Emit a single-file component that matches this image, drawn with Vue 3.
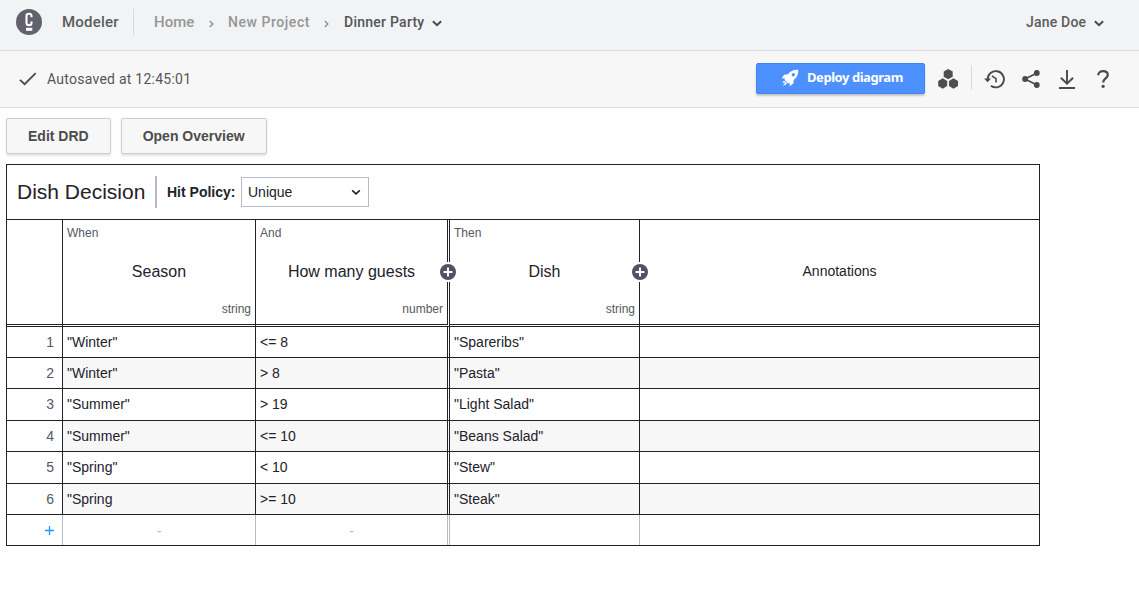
<script setup>
const rules = [
  { season: '"Winter"', guests: '<= 8', dish: '"Spareribs"' },
  { season: '"Winter"', guests: '> 8', dish: '"Pasta"' },
  { season: '"Summer"', guests: '> 19', dish: '"Light Salad"' },
  { season: '"Summer"', guests: '<= 10', dish: '"Beans Salad"' },
  { season: '"Spring"', guests: '< 10', dish: '"Stew"' },
  { season: '"Spring', guests: '>= 10', dish: '"Steak"' },
]
</script>

<template>
  <div class="app">
    <header class="topbar">
      <svg class="logo" width="26" height="26" viewBox="0 0 26 26">
        <circle cx="13" cy="13" r="13" fill="#62626e" />
        <path d="M15.500 8.300V7Q15.500 4.800 13 4.800T10.500 7V14Q10.500 16.200 13 16.200T15.500 14V12.600" fill="none" stroke="#fff" stroke-width="2.100" />
        <rect x="10" y="18.800" width="6.300" height="3" fill="#fff" />
      </svg>
      <span class="product">Modeler</span>
      <span class="divider"></span>
      <nav class="crumbs">
        <a class="home">Home</a>
        <svg class="sep" width="5" height="8" viewBox="0 0 5 8"><path d="M.8 1 3.9 4 .8 7" /></svg>
        <a class="project">New Project</a>
        <svg class="sep" width="5" height="8" viewBox="0 0 5 8"><path d="M.8 1 3.9 4 .8 7" /></svg>
        <a class="current">Dinner Party</a>
        <svg class="chev" width="10" height="7" viewBox="0 0 10 7"><path d="M.9 1.2 5 5.2 9.1 1.2" /></svg>
      </nav>
      <div class="user">
        <span>Jane Doe</span>
        <svg class="chev" width="10" height="7" viewBox="0 0 10 7"><path d="M.9 1.2 5 5.2 9.1 1.2" /></svg>
      </div>
    </header>

    <div class="toolbar">
      <svg class="check" width="18" height="14" viewBox="0 0 18 14"><path d="M1 7.8 5.6 12.2 16.7 1.2" fill="none" stroke="#4a4a4a" stroke-width="1.8" /></svg>
      <span class="saved">Autosaved at 12:45:01</span>
      <button class="deploy">
        <svg width="18" height="18" viewBox="0 0 18 18">
          <path fill="#fff" fill-rule="evenodd" d="M17.2.8C12.5.5 9.4 2.1 7 5.2L3.2 5.8.7 9.2l3.4.2-.7 1.4 3.7 3.7 1.5-.8.2 3.5 3.5-2.6.5-3.8C15.9 8.500 17.400 5.500 17.200.8ZM12.300 4.100a1.700 1.700 0 1 1 0 3.400 1.700 1.700 0 0 1 0-3.400Z" />
          <path fill="#fff" d="M2.800 11.800 1.200 14.200l2.100-.7.500.7-2 2.700 3.600-1.700.5-1.300Z" />
        </svg>
        <span>Deploy diagram</span>
      </button>
      <svg class="hexes" width="20" height="20" viewBox="0 0 20 20" fill="#4f4f4f">
        <path d="M10.200 0l4.500 2.600v5.200l-4.500 2.500-4.500-2.500V2.600Z" />
        <path d="M4.700 9.300l4.500 2.600v5.200l-4.500 2.600-4.500-2.600v-5.200Z" />
        <path d="M15.500 9.300l4.500 2.600v5.200l-4.500 2.600-4.500-2.600v-5.200Z" />
      </svg>
      <span class="split"></span>
      <svg class="history" width="21" height="20" viewBox="0 0 21 20" fill="none" stroke="#4a4a4a" stroke-width="1.900">
        <path d="M3.700 10.500a8.100 8.100 0 1 1 3.200 6.200" />
        <path d="M0 9.500h7L3.600 13.200Z" fill="#4a4a4a" stroke="none" />
        <path d="M7.900 6.800 12 9.700V13.500" stroke-width="1.600" />
      </svg>
      <svg class="share" width="18" height="18" viewBox="0 0 18 18">
        <path d="M15 3 3 9l12 6" fill="none" stroke="#4a4a4a" stroke-width="1.700" />
        <g fill="#4a4a4a"><circle cx="14.800" cy="3" r="2.900" /><circle cx="3.100" cy="9" r="2.900" /><circle cx="14.800" cy="15" r="2.900" /></g>
      </svg>
      <svg class="download" width="16" height="19" viewBox="0 0 16 19" fill="none" stroke="#4a4a4a" stroke-width="1.900">
        <path d="M8 0V13M1.900 7.800 8 13.700 14.100 7.800M0 18H16" />
      </svg>
      <svg class="help" width="12" height="18" viewBox="0 0 12 18">
        <path d="M1.200 5.300C1.200 2.700 3.200 1.200 6 1.200S10.800 2.700 10.800 5C10.800 8 6.200 8.300 6.200 12.600" fill="none" stroke="#4a4a4a" stroke-width="2.200" />
        <circle cx="6.100" cy="16.300" r="1.600" fill="#4a4a4a" />
      </svg>
    </div>

    <main>
      <div class="actions">
        <button>Edit DRD</button>
        <button>Open Overview</button>
      </div>

      <section class="decision">
        <div class="title-row">
          <h1>Dish Decision</h1>
          <div class="policy">
            <label>Hit Policy:</label>
            <div class="select">
              <span>Unique</span>
              <svg width="10" height="7" viewBox="0 0 10 7"><path d="M1.200 1.300 5 4.900 8.800 1.300" fill="none" stroke="#22222a" stroke-width="1.600" /></svg>
            </div>
          </div>
        </div>

        <div class="row head">
          <div class="cell"></div>
          <div class="cell"><small>When</small><b>Season</b><small class="type">string</small></div>
          <div class="cell inputs-end">
            <small>And</small><b>How many guests</b><small class="type">number</small>
            <svg class="add" width="22" height="22" viewBox="0 0 22 22">
              <rect x="5" y="1" width="12" height="20" fill="#fff" /><circle cx="11" cy="11" r="8" fill="#4d5360" /><path d="M6.500 11h9M11 6.500v9" stroke="#fff" stroke-width="2" />
            </svg>
          </div>
          <div class="cell">
            <small>Then</small><b>Dish</b><small class="type">string</small>
            <svg class="add" width="22" height="22" viewBox="0 0 22 22">
              <rect x="5" y="1" width="12" height="20" fill="#fff" /><circle cx="11" cy="11" r="8" fill="#4d5360" /><path d="M6.500 11h9M11 6.500v9" stroke="#fff" stroke-width="2" />
            </svg>
          </div>
          <div class="cell notes">Annotations</div>
        </div>

        <div class="rules">
          <div v-for="(rule, i) in rules" :key="i" class="row rule">
            <div class="cell index">{{ i + 1 }}</div>
            <div class="cell">{{ rule.season }}</div>
            <div class="cell inputs-end">{{ rule.guests }}</div>
            <div class="cell">{{ rule.dish }}</div>
            <div class="cell"></div>
          </div>
          <div class="row new-rule">
            <div class="cell index">
              <svg width="9" height="9" viewBox="0 0 9 9"><path d="M0 4.500H9M4.500 0V9" stroke="#1a9bfc" stroke-width="1.300" /></svg>
            </div>
            <div class="cell">-</div>
            <div class="cell inputs-end">-</div>
            <div class="cell"></div>
            <div class="cell"></div>
          </div>
        </div>
      </section>
    </main>
  </div>
</template>

<style>
body { background: #fff; }
</style>

<style scoped>
* { box-sizing: border-box; }
.app { height: 590px; overflow: hidden; font-family: "Liberation Sans", Arial, sans-serif; font-size: 14px; color: #22222a; }
svg { display: block; flex: none; }
button { font: inherit; padding: 0; }

.topbar { height: 51px; padding: 0 35px 6px 16px; display: flex; align-items: center; background: #f1f3f5; border-bottom: 1px solid #dcdcdc; font: 500 14px/20px Roboto, sans-serif; color: #5c5c5c; white-space: nowrap; }
.product { width: 56px; margin-left: 20px; font-size: 15px; letter-spacing: .2px; }
.divider { width: 1px; height: 26px; margin-left: 15px; background: #d6d8da; }
.crumbs { display: flex; align-items: center; margin-left: 20px; color: #969696; }
.home { width: 41px; font-size: 15px; }
.project { width: 84px; margin-left: 14px; letter-spacing: .55px; }
.current { width: 81px; margin-left: 15px; color: #555; letter-spacing: .25px; }
.sep { margin: 3px 0 0 14px; fill: none; stroke: #888; stroke-width: 1.2; }
.project + .sep { margin-left: 12px; }
.chev { margin: 2px 0 0 7px; fill: none; stroke: #4a4a4a; stroke-width: 2; }
.user { margin-left: auto; display: flex; align-items: center; letter-spacing: .2px; }
.user span { width: 61px; }

.toolbar { height: 57px; padding: 0 30px 0 19px; display: flex; align-items: center; background: #f7f7f7; border-bottom: 1px solid #dcdcdc; }
.saved { margin-left: 10px; font: 400 14px/20px Roboto, sans-serif; letter-spacing: .25px; color: #555; }
.deploy { width: 169px; height: 31px; margin: -1px 0 0 auto; display: flex; align-items: center; padding: 0 0 2px 24px; background: #4d90ff; border: 1px solid #3c85fa; border-radius: 2px; box-shadow: 0 2px 2px #0003; color: #fff; font: 700 13px/20px "Noto Sans", sans-serif; white-space: nowrap; }
.deploy span { margin: -2px 0 0 8px; letter-spacing: -.45px; }
.hexes { margin-left: 13px; }
.split { width: 1px; height: 25px; margin: -3px 0 0 13px; background: #dadada; }
.history { margin-left: 12px; }
.share { margin-left: 17px; }
.download { margin-left: 19px; }
.help { margin-left: 22px; }

main { padding: 10px 0 0 6px; }
.actions { display: flex; gap: 10px; height: 46px; }
.actions button { height: 36px; padding: 0 21px; background: #f7f7f7; border: 1px solid #ccc; border-radius: 2px; box-shadow: 0 2px 2px #0000001a; font-weight: 700; color: #4d4d4d; }

.decision { width: 1034px; border: 1px solid #22222a; }
.title-row { height: 55px; display: flex; align-items: center; border-bottom: 1px solid #22222a; padding-left: 10px; }
h1 { margin: 0; width: 138px; font-size: 21px; font-weight: 400; line-height: 32px; white-space: nowrap; }
.policy { height: 32px; display: flex; align-items: center; border-left: 2px solid #b8bac8; padding-left: 10px; }
label { width: 74px; font-weight: 700; }
.select { width: 128px; height: 30px; border: 1px solid #b8bac8; padding: 0 7px 0 6px; display: flex; align-items: center; justify-content: space-between; }

.row { display: grid; grid-template-columns: 56px 193px 194px 190px 399px; }
.cell { border-right: 1px solid #22222a; border-bottom: 1px solid #22222a; padding-left: 4px; display: flex; align-items: center; line-height: 16px; }
.cell:last-child { border-right: 0; }
.cell.inputs-end { border-right: 3px double #22222a; }

.head { height: 107px; }
.head .cell { position: relative; border-bottom: 3px double #22222a; padding: 6px 4px 8px; flex-direction: column; justify-content: space-between; }
.head b { font-size: 16px; font-weight: 400; line-height: 20px; padding-top: 2px; }
.head small { align-self: flex-start; font-size: 12px; line-height: 14px; color: #555862; }
.head .type { align-self: flex-end; }
.head .cell.notes { justify-content: center; padding: 0 0 2px; }
.add { position: absolute; z-index: 1; right: -12px; top: 41px; }

.rules { display: grid; grid-template-rows: 31px 31px 32px 31px 32px 31px 30px; }
.rule .cell { align-items: flex-start; padding-top: 7px; }
.rule:nth-child(even) .cell:not(.index) { background: #f7f7f8; }
.index { justify-content: flex-end; padding-right: 8px; color: #555862; }
.new-rule .cell { border-bottom: 0; border-right-color: #b8bac8; justify-content: center; padding: 1px 0 0; color: #b8bac8; }
.new-rule .cell.index { justify-content: flex-end; padding-right: 8px; }
</style>
